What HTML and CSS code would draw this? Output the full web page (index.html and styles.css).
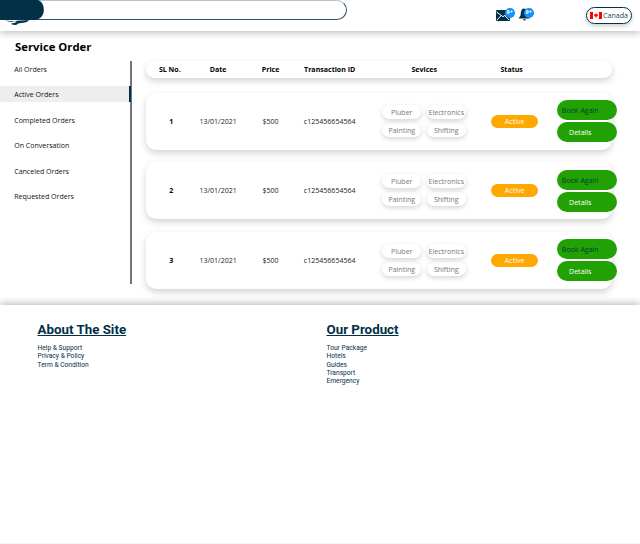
FILE: index.html
```html
<!DOCTYPE html>
<html lang="en">
<head>
<meta charset="utf-8">
<title>Service Order</title>
<link rel="stylesheet" href="styles.css">
</head>
<body>
<header class="topbar">
  <div class="search">
    <svg class="brand" width="46" height="28" viewBox="0 0 46 28"><path d="M0 0H38C42 1.5 43.8 5 43.8 10S41 19 35 20H0Z"/><path d="M5 20.5C9 22 13 22.6 17 20.8L29 20C27 23 23 22.5 18 23.6C16 26 14 24.9 12 24.6L11 23.4C14 23.4 16 22.3 17 21.8Z"/></svg>
  </div>
  <div class="tools">
    <div class="tool mail">
      <svg width="14" height="11" viewBox="0 0 14 11"><rect width="14" height="11" rx="1"/><path class="cut" d="M.5 2L7 6.7L13.5 2M.8 10L5 5.8M13.2 10L9 5.8"/></svg>
      <span class="count">9+</span>
    </div>
    <div class="tool bell">
      <svg width="11" height="13" viewBox="0 0 11 13"><path d="M5 .5C2.5.9 1.8 3 1.8 5.3C1.8 7.8 1.1 8.5 0 9.7V10.6H10.6V9.7C9.5 8.8 9 7.5 9 5.3C9 2.5 7.5.8 5 .5ZM4 11.2H7C6.7 12.9 4.3 12.9 4 11.2Z"/></svg>
      <span class="count">9+</span>
    </div>
  </div>
  <div class="country">
    <svg width="12" height="7" viewBox="0 0 12 7"><path d="M0 0H3V7H0ZM9 0H12V7H9ZM6 1L6.7 2.3L8.2 2.6L7.5 4.3L6.3 4.7V6H5.7V4.7L4.5 4.3L3.8 2.6L5.3 2.3Z"/></svg>
    <span>Canada</span>
  </div>
</header>
<main class="page">
  <h1>Service Order</h1>
  <div class="content">
    <nav class="menu">
      <a>All Orders</a>
      <a class="current">Active Orders</a>
      <a>Completed Orders</a>
      <a>On Conversation</a>
      <a>Canceled Orders</a>
      <a>Requested Orders</a>
    </nav>
    <section class="orders">
      <div class="row head"><span>SL No.</span><span>Date</span><span>Price</span><span>Transaction ID</span><span>Sevices</span><span>Status</span></div>
      <div class="row order">
        <b>1</b><span>13/01/2021</span><span>$500</span><span>c125456654564</span>
        <div class="services"><span>Pluber</span><span>Electronics</span><span>Painting</span><span>Shifting</span></div>
        <span class="status">Active</span>
        <div class="actions"><button class="again">Book Again</button><button>Details</button></div>
      </div>
      <div class="row order">
        <b>2</b><span>13/01/2021</span><span>$500</span><span>c125456654564</span>
        <div class="services"><span>Pluber</span><span>Electronics</span><span>Painting</span><span>Shifting</span></div>
        <span class="status">Active</span>
        <div class="actions"><button class="again">Book Again</button><button>Details</button></div>
      </div>
      <div class="row order">
        <b>3</b><span>13/01/2021</span><span>$500</span><span>c125456654564</span>
        <div class="services"><span>Pluber</span><span>Electronics</span><span>Painting</span><span>Shifting</span></div>
        <span class="status">Active</span>
        <div class="actions"><button class="again">Book Again</button><button>Details</button></div>
      </div>
    </section>
  </div>
</main>
<footer class="footer">
  <div class="links">
    <h2>About The Site</h2>
    <a>Help &amp; Support</a><a>Privacy &amp; Policy</a><a>Term &amp; Condition</a>
  </div>
  <div class="links">
    <h2>Our Product</h2>
    <a>Tour Package</a><a>Hotels</a><a>Guides</a><a>Transport</a><a>Emergency</a>
  </div>
</footer>
</body>
</html>
```
FILE: styles.css
```css
* { box-sizing: border-box; }
body {
  margin: 0;
  width: 640px;
  height: 544px;
  overflow: hidden;
  background: #fff;
  color: #000;
  font: 7.05px/10px "Open Sans", "Noto Sans", sans-serif;
}
h1, h2 { margin: 0; }

.topbar {
  display: flex;
  align-items: flex-start;
  height: 31px;
  box-shadow: 0 2px 7px rgba(0, 0, 0, .25);
}
.search {
  width: 347px;
  height: 20px;
  border: 1px solid #2d5068;
  border-top-color: #b5c4cd;
  border-left: 0;
  border-radius: 0 10px 10px 0;
}
.brand { display: block; margin-top: -1px; fill: #023047; }
.tools { display: flex; gap: 9.5px; margin: 8px 0 0 148.5px; width: 90px; }
.tool { position: relative; height: 14px; }
.tool svg { display: block; fill: #023047; }
.mail { width: 14px; padding-top: 2px; }
.bell { width: 11px; }
.cut { fill: none; stroke: #fff; stroke-width: 1; }
.count {
  position: absolute;
  top: 0;
  right: -5px;
  width: 9.5px;
  height: 9.5px;
  border-radius: 50%;
  background: #1492fa;
  color: #fff;
  font-size: 5.5px;
  font-weight: 700;
  line-height: 9.5px;
  text-align: center;
}
.bell .count { right: -3.5px; }
.country {
  display: flex;
  align-items: center;
  gap: 1.5px;
  width: 46px;
  height: 17px;
  margin-top: 7px;
  padding-left: 3px;
  border: 1px solid #023047;
  border-radius: 9px;
  box-shadow: 0 2px 4px rgba(0, 0, 0, .2);
  color: #23465a;
  font-size: 7.1px;
}
.country span { line-height: 9px; padding-bottom: 1px; }
.country svg { flex: none; fill: #f00; }

.page { height: 274px; padding-top: 8px; }
h1 { height: 22px; padding-left: 15px; font-size: 11.3px; line-height: 16px; }
.content { display: flex; }
.menu {
  display: flex;
  flex-direction: column;
  gap: 9.4px;
  width: 132px;
  height: 223px;
  border-right: 2px solid #727779;
  color: #111;
}
.menu a { height: 16px; padding-left: 14.2px; line-height: 17.5px; }
.menu .current {
  margin-right: -1px;
  border-right: 2px solid #023047;
  background: #eee;
}
.orders { width: 465.6px; margin-left: 14.4px; }
.row {
  display: grid;
  grid-template-columns: 46.8px 49.8px 55.2px 63px 126px 49px 1fr;
  align-items: center;
  text-align: center;
  border-radius: 10px;
  background: #fff;
  box-shadow: 0 3px 7px rgba(0, 0, 0, .18);
}
.head { height: 17px; margin-bottom: 14.6px; padding-bottom: 1px; font-weight: 700; }
.order { height: 57px; margin-bottom: 12.5px; color: #222; }
.order > span:not(.status), .order > b { padding-bottom: .6px; }
.row b { padding-left: 3px; color: #000; }
.services {
  display: grid;
  grid-template-columns: 39px 39px;
  gap: 4px 5.5px;
  justify-content: center;
  padding: 0 .3px .4px 0;
  color: #777;
}
.services span {
  height: 14px;
  border-radius: 7px;
  line-height: 14px;
  white-space: nowrap;
  box-shadow: 0 2px 5px rgba(0, 0, 0, .17);
}
.status {
  width: 47px;
  height: 13px;
  margin-left: 4px;
  border-radius: 7px;
  background: #ffa800;
  color: #fff;
  line-height: 13px;
}
.actions { display: flex; flex-direction: column; gap: 2px; margin-left: 20.6px; padding-top: .8px; }
.actions button {
  width: 60px;
  height: 20px;
  padding: 0 13px 0 0;
  border: 0;
  border-radius: 10px;
  background: #21a103;
  color: #fff;
  font: inherit;
}
.actions .again { color: #024030; }

.footer {
  display: grid;
  grid-template-columns: 289px 1fr;
  align-items: start;
  height: 239px;
  padding: 16px 0 0 37.5px;
  border-bottom: 1px solid #f6f6f6;
  box-shadow: 0 -2px 7px rgba(0, 0, 0, .25);
  color: #023047;
  font-family: Roboto, sans-serif;
  font-size: 6.67px;
}
.links { display: flex; flex-direction: column; line-height: 8.33px; }
.links h2 {
  margin-bottom: 6px;
  font-size: 13.33px;
  line-height: 17px;
  text-decoration: underline;
  text-decoration-thickness: 1px;
}
```
